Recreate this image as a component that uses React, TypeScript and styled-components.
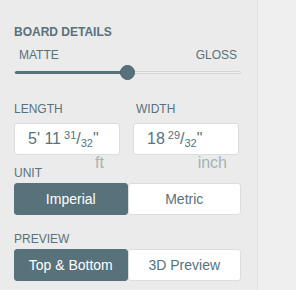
import { createGlobalStyle } from 'styled-components'
import styled from 'styled-components'

const GlobalStyle = createGlobalStyle`
	html, body {
		margin: 0;
		padding: 0;
		background: #efefef;
		font-family: 'Liberation Sans', Arial, sans-serif;
	}
`

const slate = '#57727a'

const Page = styled.div`
	display: flex;
	height: 290px;
`

const Panel = styled.div`
	width: 243px;
	padding: 25px 0 0 14px;
	background: #ebebeb;
	border-right: 1px solid #e2e2e2;
	display: flex;
	flex-direction: column;
`

const Rest = styled.div`
	flex: 1;
	background: #efefef;
`

const Title = styled.div`
	font-size: 12px;
	font-weight: bold;
	color: ${slate};
	line-height: 14px;
`

const SliderLabels = styled.div`
	display: flex;
	justify-content: space-between;
	width: 218px;
	padding-left: 5px;
	margin-top: 9px;
	font-size: 12px;
	line-height: 14px;
	color: ${slate};
`

const Track = styled.div`
	position: relative;
	width: 227px;
	height: 3px;
	margin-top: 9px;
	border: 1px solid #d4d4d4;
	box-sizing: border-box;
	background: #f1f1f1;
	border-radius: 2px;
`

const Fill = styled.div`
	height: 3px;
	margin-top: -1px;
	background: ${slate};
	border-radius: 2px;
`

const Thumb = styled.div`
	position: absolute;
	top: -7px;
	width: 15px;
	height: 15px;
	margin-left: -8px;
	border-radius: 50%;
	background: ${slate};
	border: 1px solid #4b646b;
	box-sizing: border-box;
`

const Label = styled.div<{ $indent?: number }>`
	font-size: 12px;
	line-height: 14px;
	color: ${slate};
	padding-left: ${({ $indent }) => $indent ?? 0}px;
`

const Fields = styled.div`
	display: grid;
	grid-template-columns: 106px 106px;
	column-gap: 13px;
	margin-top: 28px;
`

const Field = styled.div`
	display: flex;
	flex-direction: column;
`

const InputBox = styled.div`
	margin-top: 7px;
	height: 32px;
	box-sizing: border-box;
	background: #fff;
	border: 1px solid #dcdcdc;
	border-radius: 3px;
	padding-left: 13px;
	display: flex;
	align-items: center;
	font-size: 16px;
	color: ${slate};
`

const Sup = styled.span`
	font-size: 11px;
	position: relative;
	top: -5px;
	margin-left: 3px;
`

const Sub = styled.span`
	font-size: 11px;
	position: relative;
	top: 3px;
`

const Unit = styled.div<{ $right: number }>`
	text-align: right;
	padding-right: ${({ $right }) => $right}px;
	font-size: 16px;
	line-height: 15px;
	color: #a7b3b6;
`

const Section = styled.div<{ $top: number }>`
	margin-top: ${({ $top }) => $top}px;
`

const Toggle = styled.div`
	display: flex;
	width: 227px;
	height: 32px;
	margin-top: 3px;
`

const Choice = styled.div<{ $active?: boolean }>`
	flex: 1;
	display: flex;
	align-items: center;
	justify-content: center;
	box-sizing: border-box;
	font-size: 14px;
	border-radius: 3px;
	background: ${({ $active }) => ($active ? slate : '#fff')};
	color: ${({ $active }) => ($active ? '#fff' : slate)};
	border: 1px solid ${({ $active }) => ($active ? slate : '#dddddd')};
`

function Fraction({ whole, num, den }: { whole: string; num: string; den: string }) {
	return (
		<span>
			{whole}
			<Sup>{num}</Sup>/<Sub>{den}</Sub>"
		</span>
	)
}

export default function App() {
	const gloss = 0.5
	return (
		<>
			<GlobalStyle />
			<Page>
				<Panel>
					<Title>BOARD DETAILS</Title>
					<SliderLabels>
						<span>MATTE</span>
						<span>GLOSS</span>
					</SliderLabels>
					<Track>
						<Fill style={{ width: `${gloss * 100}%` }} />
						<Thumb style={{ left: `${gloss * 100}%` }} />
					</Track>
					<Fields>
						<Field>
							<Label>LENGTH</Label>
							<InputBox>
								<Fraction whole="5' 11" num="31" den="32" />
							</InputBox>
							<Unit $right={16}>ft</Unit>
						</Field>
						<Field>
							<Label $indent={3}>WIDTH</Label>
							<InputBox>
								<Fraction whole="18" num="29" den="32" />
							</InputBox>
							<Unit $right={12}>inch</Unit>
						</Field>
					</Fields>
					<Section $top={-4}>
						<Label>UNIT</Label>
						<Toggle>
							<Choice $active>Imperial</Choice>
							<Choice>Metric</Choice>
						</Toggle>
					</Section>
					<Section $top={17}>
						<Label>PREVIEW</Label>
						<Toggle>
							<Choice $active>Top &amp; Bottom</Choice>
							<Choice>3D Preview</Choice>
						</Toggle>
					</Section>
				</Panel>
				<Rest />
			</Page>
		</>
	)
}
